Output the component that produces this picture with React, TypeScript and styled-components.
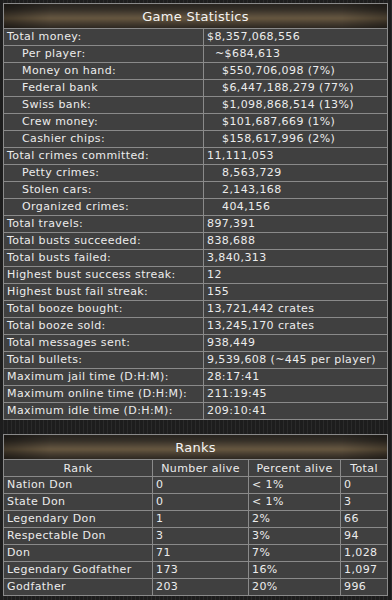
import { FC } from 'react';
import styled, { createGlobalStyle } from 'styled-components';

const GlobalStyle = createGlobalStyle`
  html, body {
    margin: 0;
    padding: 0;
    background-color: #1d1d1d;
    background-image: repeating-linear-gradient(
      to right,
      #1d1d1d 0px,
      #1d1d1d 3px,
      #2a2a2a 3px,
      #2a2a2a 4px
    );
  }
  body {
    font-family: 'DejaVu Sans', Verdana, sans-serif;
    font-size: 11px;
    color: #ececec;
  }
`;

const Page = styled.div`
  display: flex;
  flex-direction: column;
  gap: 14px;
  padding: 3px 5px 0 3px;
  height: 600px;
  box-sizing: border-box;
`;

const Table = styled.table`
  width: 384px;
  border-collapse: collapse;
  table-layout: fixed;
  border: 1px solid #8a8a8a;
`;

const Head = styled.th`
  height: 24px;
  padding: 0;
  font-size: 13px;
  font-weight: normal;
  letter-spacing: 0.3px;
  color: #f4f4f4;
  text-align: center;
  border: 1px solid #8a8a8a;
  background:
    linear-gradient(to right, rgba(0, 0, 0, 0.35) 0%, rgba(0, 0, 0, 0) 12%, rgba(0, 0, 0, 0) 88%, rgba(0, 0, 0, 0.3) 100%),
    linear-gradient(
      to bottom,
      #27241f 0%,
      #363028 22%,
      #5b4e3c 48%,
      #66573f 58%,
      #463c30 78%,
      #2a2620 100%
    );
`;

const ColHead = styled.th`
  height: 16px;
  padding: 0 2px;
  font-weight: normal;
  letter-spacing: 0.4px;
  text-align: center;
  white-space: nowrap;
  background: #404040;
  border: 1px solid #8a8a8a;
`;

const Cell = styled.td<{ $indent?: number }>`
  height: 16px;
  padding: 0 3px 0 ${(p) => 3 + (p.$indent ?? 0)}px;
  white-space: nowrap;
  overflow: hidden;
  line-height: 16px;
  letter-spacing: 0.4px;
  background: #404040;
  border: 1px solid #8a8a8a;
`;

type Stat = [string, string, number?, number?];

const stats: Stat[] = [
  ['Total money:', '$8,357,068,556'],
  ['Per player:', '~$684,613', 15, 8],
  ['Money on hand:', '$550,706,098 (7%)', 15, 15],
  ['Federal bank', '$6,447,188,279 (77%)', 15, 15],
  ['Swiss bank:', '$1,098,868,514 (13%)', 15, 15],
  ['Crew money:', '$101,687,669 (1%)', 15, 15],
  ['Cashier chips:', '$158,617,996 (2%)', 15, 15],
  ['Total crimes committed:', '11,111,053'],
  ['Petty crimes:', '8,563,729', 15, 15],
  ['Stolen cars:', '2,143,168', 15, 15],
  ['Organized crimes:', '404,156', 15, 15],
  ['Total travels:', '897,391'],
  ['Total busts succeeded:', '838,688'],
  ['Total busts failed:', '3,840,313'],
  ['Highest bust success streak:', '12'],
  ['Highest bust fail streak:', '155'],
  ['Total booze bought:', '13,721,442 crates'],
  ['Total booze sold:', '13,245,170 crates'],
  ['Total messages sent:', '938,449'],
  ['Total bullets:', '9,539,608 (~445 per player)'],
  ['Maximum jail time (D:H:M):', '28:17:41'],
  ['Maximum online time (D:H:M):', '211:19:45'],
  ['Maximum idle time (D:H:M):', '209:10:41'],
];

const ranks: [string, string, string, string][] = [
  ['Nation Don', '0', '< 1%', '0'],
  ['State Don', '0', '< 1%', '3'],
  ['Legendary Don', '1', '2%', '66'],
  ['Respectable Don', '3', '3%', '94'],
  ['Don', '71', '7%', '1,028'],
  ['Legendary Godfather', '173', '16%', '1,097'],
  ['Godfather', '203', '20%', '996'],
];

const App: FC = () => (
  <>
    <GlobalStyle />
    <Page>
      {/* Game statistics */}
      <Table>
        <colgroup>
          <col style={{ width: 200 }} />
          <col style={{ width: 184 }} />
        </colgroup>
        <thead>
          <tr>
            <Head colSpan={2}>Game Statistics</Head>
          </tr>
        </thead>
        <tbody>
          {stats.map(([label, value, li, vi]) => (
            <tr key={label}>
              <Cell $indent={li}>{label}</Cell>
              <Cell $indent={vi}>{value}</Cell>
            </tr>
          ))}
        </tbody>
      </Table>

      {/* Ranks */}
      <Table>
        <colgroup>
          <col style={{ width: 149 }} />
          <col style={{ width: 96 }} />
          <col style={{ width: 92 }} />
          <col style={{ width: 47 }} />
        </colgroup>
        <thead>
          <tr>
            <Head colSpan={4}>Ranks</Head>
          </tr>
          <tr>
            <ColHead>Rank</ColHead>
            <ColHead>Number alive</ColHead>
            <ColHead>Percent alive</ColHead>
            <ColHead>Total</ColHead>
          </tr>
        </thead>
        <tbody>
          {ranks.map(([rank, alive, pct, total]) => (
            <tr key={rank}>
              <Cell>{rank}</Cell>
              <Cell>{alive}</Cell>
              <Cell>{pct}</Cell>
              <Cell>{total}</Cell>
            </tr>
          ))}
        </tbody>
      </Table>
    </Page>
  </>
);

export default App;
